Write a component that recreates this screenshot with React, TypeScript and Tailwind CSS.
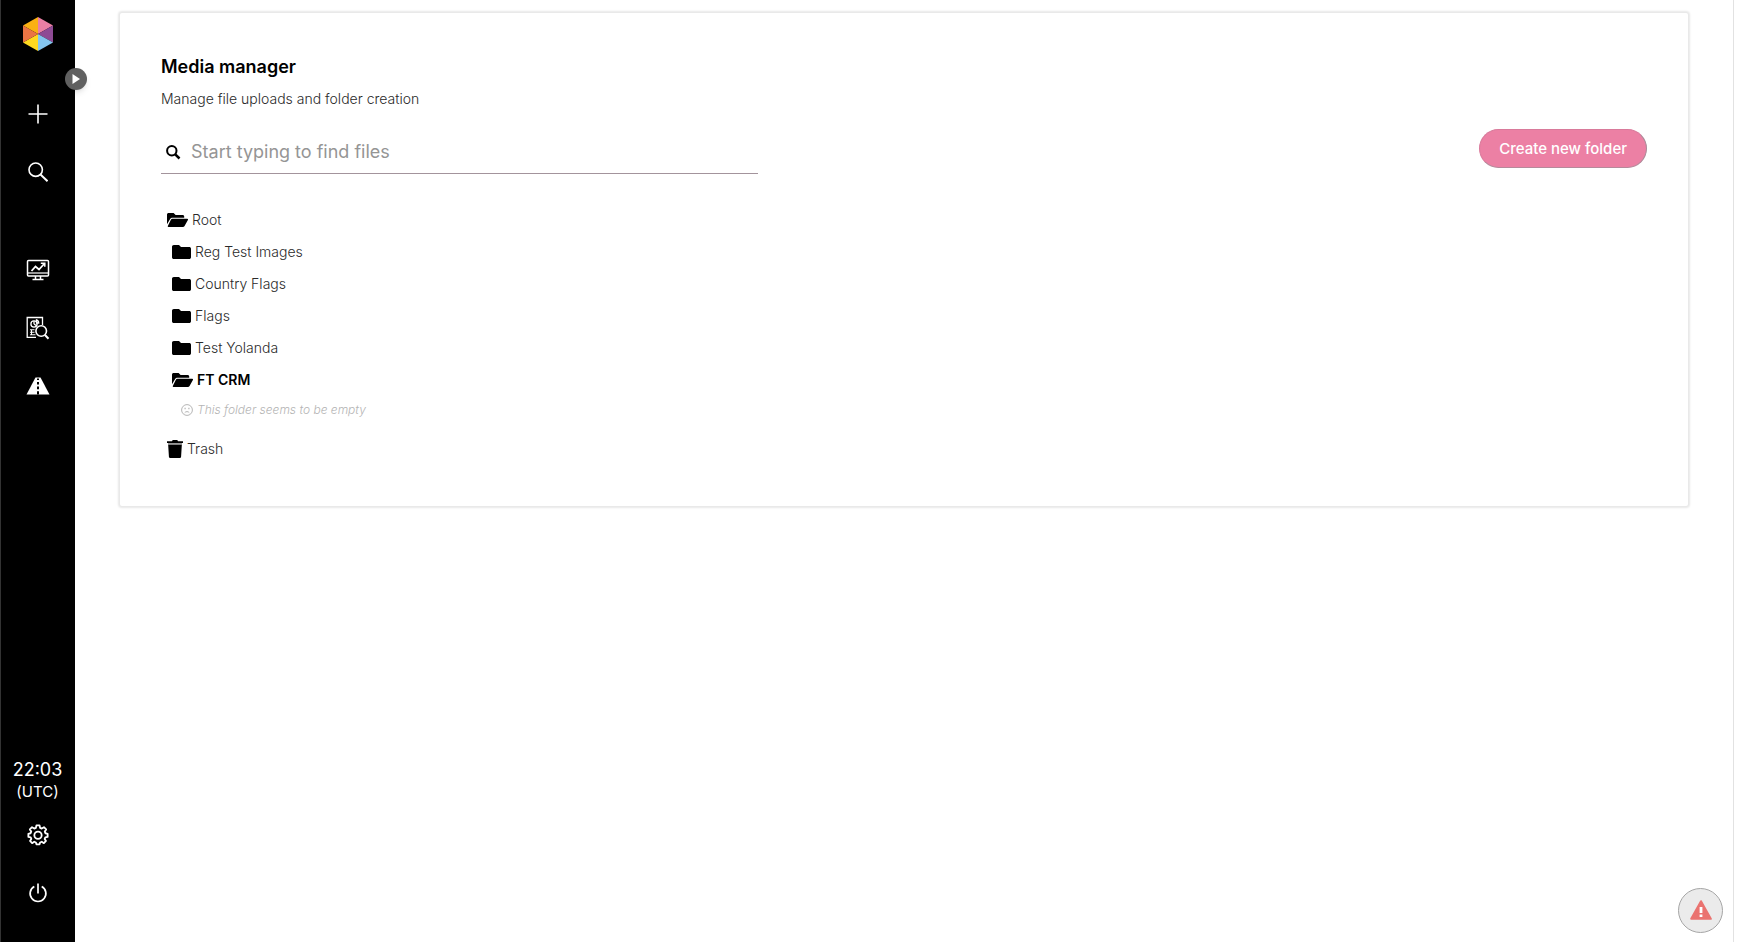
import type { ReactNode } from "react";

const NAV_BUTTON = "flex h-[58px] w-full items-center justify-center text-white";

function Logo() {
  return (
    <svg viewBox="0 0 32 36" className="h-9 w-8" aria-hidden="true">
      <path d="M16 18 16 1 1 9.5Z" fill="#fbb012" />
      <path d="M16 18 16 1 31 9.5Z" fill="#ea7fa4" />
      <path d="M16 18 31 9.5V26.5Z" fill="#8e4a94" />
      <path d="M16 18 31 26.5 16 35Z" fill="#84c5ee" />
      <path d="M16 18V35L1 26.5Z" fill="#ffd91f" />
      <path d="M16 18 1 26.5V9.5Z" fill="#ea7444" />
    </svg>
  );
}

function PlusIcon() {
  return (
    <svg viewBox="0 0 20 20" className="size-5" stroke="currentColor" strokeWidth="1.6" aria-hidden="true">
      <path d="M10 .5v19M.5 10h19" />
    </svg>
  );
}

function SearchIcon() {
  return (
    <svg viewBox="0 0 20 20" className="size-5" fill="none" stroke="currentColor" strokeWidth="1.6" aria-hidden="true">
      <circle cx="7.7" cy="7.7" r="6.7" />
      <path d="m12.5 12.5 7 6.7" strokeWidth="1.9" />
    </svg>
  );
}

function MonitorIcon() {
  return (
    <svg viewBox="0 0 24 22" className="h-[22px] w-6" fill="none" stroke="currentColor" strokeWidth="1.5" aria-hidden="true">
      <rect x="1.5" y="1.5" width="21" height="15.5" rx="1" />
      <path d="M1.5 14h21" strokeWidth="1.2" />
      <path d="M9.5 17v3M14.5 17v3M6.5 20.5h11" />
      <path d="m5.5 12 4-4.500 3.500 3 5.500-6" strokeWidth="1.8" />
      <path d="M14.800 4.200h4v3.600" />
    </svg>
  );
}

function ReportIcon() {
  return (
    <svg viewBox="0 0 24 24" className="size-6" fill="none" stroke="currentColor" strokeWidth="1.3" aria-hidden="true">
      <path d="M10 21.300H1.200V1.500h15.300v7.500" />
      <circle cx="8" cy="8" r="3.100" />
      <path d="M8 8V5M8 8l2.500 1.800M10.500 3.800a3.200 3.200 0 0 1 2.200 3.200H10.500Z" />
      <path d="M4 13.700H8.500M4 16.200H8.500M4 18.700h5.500M5.500 13.500v5.500" strokeWidth="1.100" />
      <circle cx="15.200" cy="15" r="5.300" strokeWidth="1.600" />
      <path d="m19 19 3.500 3.700" strokeWidth="2" />
    </svg>
  );
}

function RoadIcon() {
  return (
    <svg viewBox="0 0 24 18" className="h-[18px] w-6" aria-hidden="true">
      <path d="M9.500 .5h5L23.500 17.500H.5Z" fill="currentColor" />
      <path d="M12 1.500v1.500M12 5v2.500M12 9.500v2.700M12 14.300v3.200" stroke="#000" strokeWidth="2" />
    </svg>
  );
}

function GearIcon() {
  return (
    <svg viewBox="0 0 24 24" className="size-[22px]" fill="none" stroke="currentColor" strokeWidth="2" strokeLinejoin="round" aria-hidden="true">
      <path d="M10.300 1.500h3.400l.6 2.700 1.800.8 2.400-1.500 2.400 2.400-1.500 2.400.8 1.800 2.300.6v3.400l-2.500.6-.7 1.600 1.400 2.200-2.300 2.400-2.300-1.500-1.800.8-.6 2h-3.400l-.6-2-1.800-.8-2.300 1.500-2.300-2.400 1.400-2.200-.7-1.600-2.500-.6v-3.400l2.300-.6.800-1.800-1.500-2.400 2.400-2.400 2.400 1.500 1.800-.8Z" />
      <circle cx="12" cy="12.300" r="4" />
    </svg>
  );
}

function PowerIcon() {
  return (
    <svg viewBox="0 0 20 20" className="size-5" fill="none" stroke="currentColor" strokeWidth="1.700" aria-hidden="true">
      <path d="M6.300 3.600a7.900 7.900 0 1 0 7.400 0M10 .5V10.500" />
    </svg>
  );
}

function FolderIcon() {
  return (
    <svg viewBox="0 0 19 14" className="h-3.5 w-[19px] shrink-0" fill="currentColor" aria-hidden="true">
      <path d="M1.800 0h5.200l2 2h8.200c1 0 1.800.7 1.800 1.700v8.500c0 1-.8 1.800-1.800 1.800H1.800C.8 14 0 13.200 0 12.200V1.800C0 .8.800 0 1.800 0Z" />
    </svg>
  );
}

function OpenFolderIcon() {
  return (
    <svg viewBox="0 0 21 14" className="h-3.5 w-[21px] shrink-0" fill="currentColor" aria-hidden="true">
      <path d="M1.600 0h5l2 2h7c.9 0 1.600.6 1.600 1.500v1.300H5.400c-1 0-1.900.6-2.400 1.400L0 11.200V1.600C0 .7.700 0 1.600 0Z" />
      <path d="M5.300 5.800h15c.6 0 .9.600.6 1.100l-3.500 6.300c-.3.500-.8.800-1.400.8H1.400c-.5 0-.8-.6-.6-1l3.200-6.400c.3-.5.700-.8 1.300-.8Z" />
    </svg>
  );
}

function TrashIcon() {
  return (
    <svg viewBox="0 0 16 18" className="h-[18px] w-4 shrink-0" fill="currentColor" aria-hidden="true">
      <path d="M0 1.300h5L5.700 0h4.600l.7 1.300h5v1.700H0Z" />
      <path d="M1.200 4.800h13.600l-.7 11.600c-.1.900-.8 1.600-1.700 1.600h-8.800c-.9 0-1.600-.7-1.700-1.600Z" />
      <path d="M1 3h14v1.800H1Z" opacity=".4" />
    </svg>
  );
}

function SadIcon() {
  return (
    <svg viewBox="0 0 12 12" className="size-3 shrink-0" fill="none" stroke="currentColor" aria-hidden="true">
      <circle cx="6" cy="6" r="5.400" />
      <path d="M3.700 8.800c1-1.600 3.600-1.600 4.600 0" />
      <path d="M3.500 4.500h1.200M7.300 4.500h1.200" strokeWidth="1.300" />
    </svg>
  );
}

function TreeRow({ icon, label, nested, bold }: { icon: ReactNode; label: string; nested?: boolean; bold?: boolean }) {
  return (
    <button
      type="button"
      className={`flex h-8 items-center gap-1 text-sm ${nested ? "pl-[5px]" : ""} ${bold ? "font-semibold" : "font-light"}`}
    >
      {icon}
      <span className={bold ? "text-black" : "text-[#2a2a2a]"}>{label}</span>
    </button>
  );
}

export default function App() {
  return (
    <div className="flex min-h-screen bg-white font-['Inter','Liberation_Sans',sans-serif] text-black">
      <nav aria-label="Main" className="relative flex w-[75px] shrink-0 flex-col items-center border-l border-[#333] bg-black pt-4 pr-px pb-5">
        <a href="#home" aria-label="Home">
          <Logo />
        </a>
        <button
          type="button"
          aria-label="Expand menu"
          className="absolute top-[68px] -right-3 flex size-[22px] items-center justify-center rounded-full bg-[#606060] shadow-md"
        >
          <svg viewBox="0 0 8 10" className="h-2.5 w-2" aria-hidden="true">
            <path d="M.5 0v10L8 5Z" fill="#fff" />
          </svg>
        </button>
        <div className="mt-[33px] w-full">
          <button type="button" aria-label="Add" className={NAV_BUTTON}>
            <PlusIcon />
          </button>
          <button type="button" aria-label="Search" className={NAV_BUTTON}>
            <SearchIcon />
          </button>
        </div>
        <div className="mt-10 w-full">
          <button type="button" aria-label="Dashboard" className={NAV_BUTTON}>
            <MonitorIcon />
          </button>
          <button type="button" aria-label="Reports" className={NAV_BUTTON}>
            <ReportIcon />
          </button>
          <button type="button" aria-label="Roadmap" className={NAV_BUTTON}>
            <RoadIcon />
          </button>
        </div>
        <div className="mt-auto w-full text-center text-white">
          <p className="text-lg leading-6">22:03</p>
          <p className="mb-1 text-[15px] leading-5">(UTC)</p>
          <button type="button" aria-label="Settings" className={NAV_BUTTON}>
            <GearIcon />
          </button>
          <button type="button" aria-label="Log out" className={NAV_BUTTON}>
            <PowerIcon />
          </button>
        </div>
      </nav>

      <main className="min-w-0 flex-1 px-[45px] pt-[13px]">
        <section className="rounded-xs bg-white px-[41px] pt-[42px] pb-[41px] shadow-[0_0_2px_2px_#e8e8e8]">
          <h1 className="text-lg leading-6 font-semibold">Media manager</h1>
          <p className="mt-2.5 text-sm leading-5 font-light text-[#2a2a2a]">Manage file uploads and folder creation</p>
          <div className="mt-5 flex items-start justify-between">
            <label className="flex h-[45px] w-[597px] max-w-full items-center gap-2.5 border-b border-[#a3949c] pt-0.5 pl-1">
              <svg viewBox="0 0 16 16" className="size-4 shrink-0" fill="none" stroke="#000" aria-hidden="true">
                <circle cx="6.800" cy="6.800" r="4.700" strokeWidth="2" />
                <path d="m10.300 10.300 4.200 4.200" strokeWidth="2.500" />
              </svg>
              <input
                type="text"
                aria-label="Find files"
                placeholder="Start typing to find files"
                className="min-w-0 flex-1 bg-transparent text-lg outline-none placeholder:text-[#959595]"
              />
            </label>
            <button
              type="button"
              className="h-[39px] rounded-full border border-[#d97a9b] border-r-[#a98a98] border-b-[#b58a9b] bg-[#ec80a4] px-[19px] pt-px text-[15px] font-medium text-white"
            >
              Create new folder
            </button>
          </div>
          <div className="mt-[30px] pl-1.5">
            <TreeRow icon={<OpenFolderIcon />} label="Root" />
            <TreeRow nested icon={<FolderIcon />} label="Reg Test Images" />
            <TreeRow nested icon={<FolderIcon />} label="Country Flags" />
            <TreeRow nested icon={<FolderIcon />} label="Flags" />
            <TreeRow nested icon={<FolderIcon />} label="Test Yolanda" />
            <TreeRow nested bold icon={<OpenFolderIcon />} label="FT CRM" />
            <p className="mb-[9px] flex h-7 items-center gap-1 pl-3.5 text-xs font-light text-[#b5b5b5] italic">
              <SadIcon />
              This folder seems to be empty
            </p>
            <TreeRow icon={<TrashIcon />} label="Trash" />
          </div>
        </section>
      </main>

      <div className="w-[13px] shrink-0 border-l border-[#e2e2e2]" />

      <button
        type="button"
        aria-label="Show warnings"
        className="fixed right-[23px] bottom-[9px] flex size-[45px] items-center justify-center rounded-full border border-[#a5a5a5] bg-[#ebebeb] pb-0.5"
      >
        <svg viewBox="0 0 22 20" className="h-5 w-[22px]" aria-hidden="true">
          <path d="M11 1.200 20.800 18.800H1.200Z" fill="#ea7370" stroke="#ea7370" strokeWidth="2" strokeLinejoin="round" />
          <path d="M11 7v6M11 14.500v2.500" stroke="#fff" strokeWidth="2.800" />
        </svg>
      </button>
    </div>
  );
}
